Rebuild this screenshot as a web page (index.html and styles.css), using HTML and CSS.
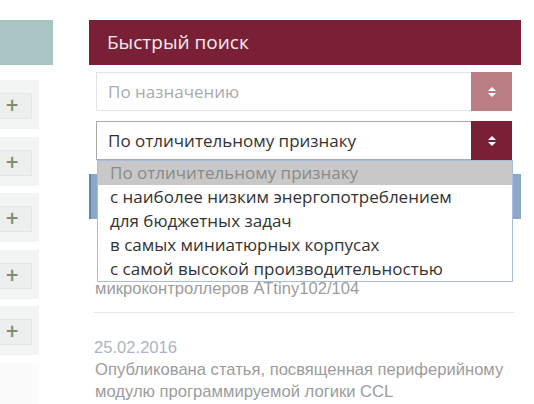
FILE: index.html
```html
<!DOCTYPE html>
<html lang="ru">
<head>
    <meta charset="utf-8">
    <title>Быстрый поиск</title>
    <link rel="stylesheet" href="styles.css">
</head>
<body>

    <div class="page">
        <!-- Left column: catalogue -->
        <div class="catalog">
            <div class="catalog-head"></div>
            <div class="catalog-list">
                <div class="catalog-item"><span class="plus">+</span></div>
                <div class="catalog-item"><span class="plus">+</span></div>
                <div class="catalog-item"><span class="plus">+</span></div>
                <div class="catalog-item"><span class="plus">+</span></div>
                <div class="catalog-item"><span class="plus">+</span></div>
                <div class="catalog-item faded"></div>
            </div>
        </div>

        <!-- Right column: quick search and news -->
        <div class="sidebar">
            <div class="panel-title">Быстрый поиск</div>

            <div class="search-fields">
                <div class="select muted">
                    <span class="select-text">По назначению</span>
                    <span class="select-btn"><svg width="8" height="10" viewBox="0 0 8 10"><path d="M4 0 L8 4 L0 4 Z M4 10 L8 6 L0 6 Z" fill="#fff"/></svg></span>
                </div>
                <div class="select-wrap">
                    <div class="select">
                        <span class="select-text">По отличительному признаку</span>
                        <span class="select-btn"><svg width="8" height="10" viewBox="0 0 8 10"><path d="M4 0 L8 4 L0 4 Z M4 10 L8 6 L0 6 Z" fill="#fff"/></svg></span>
                    </div>
                    <ul class="dropdown">
                        <li class="selected">По отличительному признаку</li>
                        <li>с наиболее низким энергопотреблением</li>
                        <li>для бюджетных задач</li>
                        <li>в самых миниатюрных корпусах</li>
                        <li>с самой высокой производительностью</li>
                    </ul>
                </div>
            </div>

            <div class="news-title"></div>

            <div class="news">
                <!-- top of this item is covered by the open list -->
                <div class="news-item cut">
                    <div class="news-text">микроконтроллеров ATtiny102/104</div>
                </div>
                <div class="news-item">
                    <div class="news-date">25.02.2016</div>
                    <div class="news-text">Опубликована статья, посвященная периферийному модулю программируемой логики CCL</div>
                </div>
            </div>
        </div>
    </div>

</body>
</html>
```

FILE: styles.css
```css
* {
    margin: 0;
    padding: 0;
    box-sizing: border-box;
}

body {
    background-color: #fff;
    font-family: 'Open Sans', sans-serif;
    overflow: hidden;
}

.page {
    display: flex;
    gap: 36px;
    padding-top: 20px;
}

/* Left catalogue column */
.catalog {
    width: 53px;
    flex-shrink: 0;
}

.catalog-head {
    height: 45px;
    background-color: #a8c5c3;
}

.catalog-list {
    display: flex;
    flex-direction: column;
    gap: 7.5px;
    margin-top: 15px;
}

.catalog-item {
    width: 39px;
    height: 49px;
    background-color: #f3f5f5;
    padding-top: 13px;
}

.catalog-item.faded {
    background-color: #fbfbfb;
}

.plus {
    display: block;
    width: 32px;
    height: 26px;
    background-color: #ebefed;
    border: 1px solid #e2e7e4;
    border-left: none;
    color: #7d8f6e;
    font-family: 'DejaVu Sans', sans-serif;
    font-weight: bold;
    font-size: 17px;
    line-height: 23px;
    text-align: center;
    padding-right: 7px;
}

/* Right column */
.sidebar {
    width: 432px;
}

.panel-title {
    height: 45px;
    background-color: #7a2036;
    color: #f4ebed;
    font-size: 19px;
    line-height: 44px;
    padding-left: 18px;
}

.search-fields {
    display: flex;
    flex-direction: column;
    gap: 10px;
    padding: 7px 9px 0 7px;
}

.select {
    display: flex;
    height: 39px;
    border: 1px solid #a9a9a9;
    background-color: #fff;
}

.select.muted {
    border-color: #e2e2e2;
}

.select-text {
    flex: 1;
    font-size: 17px;
    line-height: 37px;
    padding-left: 11px;
    color: #333;
}

.muted .select-text {
    color: #aaa;
}

.select-btn {
    width: 41px;
    margin: -1px -1px -1px 0;
    background-color: #7a2036;
    display: flex;
    align-items: center;
    justify-content: center;
}

.muted .select-btn {
    background-color: #ba7d84;
}

.select-wrap {
    position: relative;
}

/* Open list of the second select */
.dropdown {
    position: absolute;
    top: 39px;
    left: 1px;
    width: 416px;
    list-style: none;
    background-color: #fff;
    border: 1px solid #a7bde0;
    z-index: 2;
}

.dropdown li {
    height: 24px;
    font-size: 17px;
    line-height: 23px;
    padding-left: 12px;
    color: #333;
}

.dropdown li.selected {
    background-color: #c8c8c8;
    color: #8a8a8a;
}

/* News block, mostly under the open list */
.news-title {
    height: 45px;
    margin-top: 14px;
    background-color: #8ba8c4;
    border-left: 2px solid #5d87b0;
}

.news {
    padding: 0 7px 0 5px;
    font-family: 'Liberation Sans', Arial, sans-serif;
    font-size: 16.6px;
    line-height: 22px;
}

.news-item {
    padding-top: 24px;
}

.news-item.cut {
    padding-top: 59px;
    padding-bottom: 12px;
    border-bottom: 1px solid #e6e6e6;
}

.news-date {
    color: #aab5c1;
}

.news-text {
    color: #9c9c9c;
    padding-left: 1px;
}
```
